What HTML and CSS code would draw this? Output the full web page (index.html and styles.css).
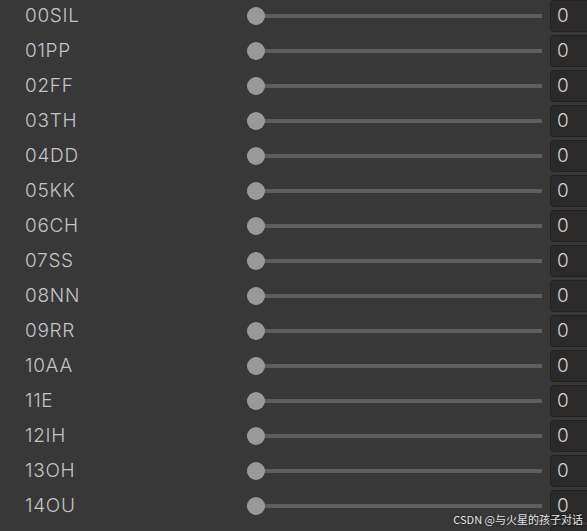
FILE: index.html
```html
<!DOCTYPE html>
<html>
<head>
<meta charset="utf-8">
<link rel="stylesheet" href="styles.css">
</head>
<body>
<div class="list">
  <div class="row"><span class="label">00SIL</span><div class="slider"><div class="track"></div><div class="knob"></div></div><div class="field">0</div></div>
  <div class="row"><span class="label">01PP</span><div class="slider"><div class="track"></div><div class="knob"></div></div><div class="field">0</div></div>
  <div class="row"><span class="label">02FF</span><div class="slider"><div class="track"></div><div class="knob"></div></div><div class="field">0</div></div>
  <div class="row"><span class="label">03TH</span><div class="slider"><div class="track"></div><div class="knob"></div></div><div class="field">0</div></div>
  <div class="row"><span class="label">04DD</span><div class="slider"><div class="track"></div><div class="knob"></div></div><div class="field">0</div></div>
  <div class="row"><span class="label">05KK</span><div class="slider"><div class="track"></div><div class="knob"></div></div><div class="field">0</div></div>
  <div class="row"><span class="label">06CH</span><div class="slider"><div class="track"></div><div class="knob"></div></div><div class="field">0</div></div>
  <div class="row"><span class="label">07SS</span><div class="slider"><div class="track"></div><div class="knob"></div></div><div class="field">0</div></div>
  <div class="row"><span class="label">08NN</span><div class="slider"><div class="track"></div><div class="knob"></div></div><div class="field">0</div></div>
  <div class="row"><span class="label">09RR</span><div class="slider"><div class="track"></div><div class="knob"></div></div><div class="field">0</div></div>
  <div class="row"><span class="label">10AA</span><div class="slider"><div class="track"></div><div class="knob"></div></div><div class="field">0</div></div>
  <div class="row"><span class="label">11E</span><div class="slider"><div class="track"></div><div class="knob"></div></div><div class="field">0</div></div>
  <div class="row"><span class="label">12IH</span><div class="slider"><div class="track"></div><div class="knob"></div></div><div class="field">0</div></div>
  <div class="row"><span class="label">13OH</span><div class="slider"><div class="track"></div><div class="knob"></div></div><div class="field">0</div></div>
  <div class="row"><span class="label">14OU</span><div class="slider"><div class="track"></div><div class="knob"></div></div><div class="field">0</div></div>
  <div class="row"><span class="label"></span><div class="slider"></div><div class="field"></div></div>
</div>
<div class="watermark">CSDN @与火星的孩子对话</div>
</body>
</html>
```
FILE: styles.css
```css
html, body {
  margin: 0;
  padding: 0;
  background: #383838;
  width: 587px;
  height: 531px;
  overflow: hidden;
}
body {
  position: relative;
  font-family: Inter, "Noto Sans", sans-serif;
  color: #c4c4c4;
}
.list {
  display: flex;
  flex-direction: column;
  gap: 3px;
}
.row {
  display: grid;
  grid-template-columns: 247px 295px 45px;
  height: 32px;
  align-items: center;
}
.label {
  padding-left: 25px;
  font-size: 19px;
  font-weight: 300;
  letter-spacing: 0.7px;
  line-height: 32px;
}
.slider {
  position: relative;
  height: 32px;
}
.track {
  position: absolute;
  left: 0;
  right: 0;
  top: 14px;
  height: 4px;
  background: #5e5e5e;
}
.knob {
  position: absolute;
  left: 0;
  top: 7px;
  width: 18px;
  height: 18px;
  border-radius: 50%;
  background: #999999;
}
.field {
  box-sizing: border-box;
  margin-left: 8px;
  width: 50px;
  height: 32px;
  background: #2a2a2a;
  border: 1px solid #212121;
  border-radius: 4px;
  padding-left: 6px;
  font-size: 19px;
  font-weight: 300;
  line-height: 30px;
  color: #d2d2d2;
}
.watermark {
  position: absolute;
  right: 4px;
  top: 512px;
  font-family: "Noto Sans CJK SC", "Noto Sans", sans-serif;
  font-size: 11px;
  line-height: 15px;
  color: #e6e6e6;
  text-shadow: 0 0 2px rgba(0,0,0,0.6);
}
```
